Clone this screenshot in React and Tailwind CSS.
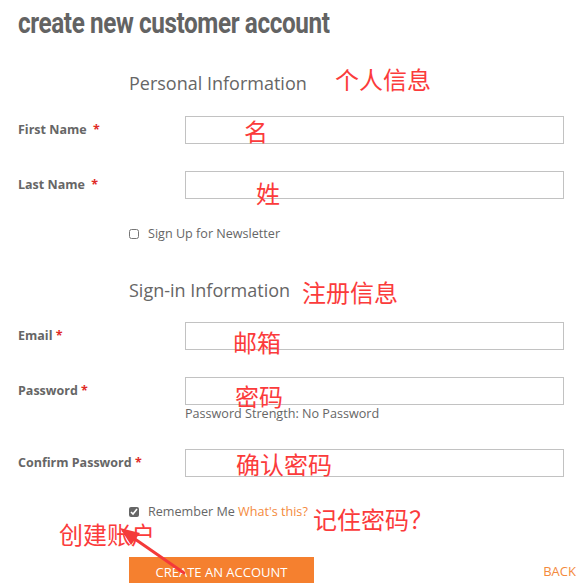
import React from 'react';

const Field = ({ label, gap = '', className = '' }) => (
  <div className={`flex items-center h-[28px] ${className}`}>
    <label className="w-[167px] shrink-0 text-[12.5px] font-bold text-[#666]">
      {label} <span className={`${gap} text-[#e02b27]`}>*</span>
    </label>
    <input className="flex-1 h-[28px] border border-[#c2c2c2] bg-white outline-none" />
  </div>
);

const Note = ({ children, className }) => (
  <span className={`absolute text-[24px] leading-none text-[#fb3b3b] whitespace-nowrap ${className}`}>{children}</span>
);

export default function App() {
  return (
    <div
      className="relative w-[579px] h-[583px] overflow-hidden bg-white pl-[18px] pr-[15px]"
      style={{ fontFamily: '"Open Sans", "Noto Sans CJK SC", sans-serif' }}
    >
      <h1
        className="pt-[5px] h-[41px] text-[30px] leading-[36px] font-bold text-[#636363] origin-left scale-x-[0.81] whitespace-nowrap tracking-[-0.5px]"
        style={{ fontFamily: 'Roboto, sans-serif' }}
      >
        create new customer account
      </h1>

      <h2 className="ml-[111px] mt-[30px] text-[18px] leading-[24px] text-[#666]">Personal Information</h2>

      <Field label="First Name" gap="ml-[3px]" className="mt-[21px]" />
      <Field label="Last Name" gap="ml-[3px]" className="mt-[27px]" />

      <label className="ml-[111px] mt-[25px] flex items-center h-[20px] gap-[9px] text-[12.6px] text-[#666]">
        <input type="checkbox" className="w-[10px] h-[10px] accent-[#888]" />
        Sign Up for Newsletter
      </label>

      <h2 className="ml-[111px] mt-[34px] text-[18px] leading-[24px] text-[#666]">Sign-in Information</h2>

      <Field label="Email" className="mt-[20px]" />
      <Field label="Password" className="mt-[27px]" />
      <div className="ml-[167px] text-[12.6px] leading-[18px] text-[#666]">Password Strength: No Password</div>

      <Field label="Confirm Password" className="mt-[26px]" />

      <label className="ml-[111px] mt-[25px] flex items-center h-[20px] gap-[9px] text-[12.6px] text-[#666]">
        <input type="checkbox" defaultChecked className="w-[10px] h-[10px] accent-[#666]" />
        <span>Remember Me <a className="text-[#f48a3c]">What's this?</a></span>
      </label>

      <div className="mt-[35px] flex items-start justify-between">
        <button className="ml-[111px] w-[185px] h-[32px] bg-[#f5802f] text-white text-[13px] uppercase">
          Create an Account
        </button>
        <a className="mt-[5px] mr-[-12px] text-[13px] text-[#f48a3c]">BACK</a>
      </div>

      <Note className="left-[335px] top-[68px]">个人信息</Note>
      <Note className="left-[244px] top-[120px]">名</Note>
      <Note className="left-[256px] top-[182px]">姓</Note>
      <Note className="left-[302px] top-[281px]">注册信息</Note>
      <Note className="left-[233px] top-[331px]">邮箱</Note>
      <Note className="left-[235px] top-[385px]">密码</Note>
      <Note className="left-[236px] top-[453px]">确认密码</Note>
      <Note className="left-[313px] top-[508px]">记住密码？</Note>
      <Note className="left-[59px] top-[523px]">创建账户</Note>

      <svg className="absolute left-0 top-0" width="579" height="583" viewBox="0 0 579 583">
        <line x1="184" y1="573" x2="132" y2="537" stroke="#f43a3a" strokeWidth="3" strokeLinecap="round" />
        <polygon points="120,528 140,533 131,545" fill="#f43a3a" />
      </svg>
    </div>
  );
}
